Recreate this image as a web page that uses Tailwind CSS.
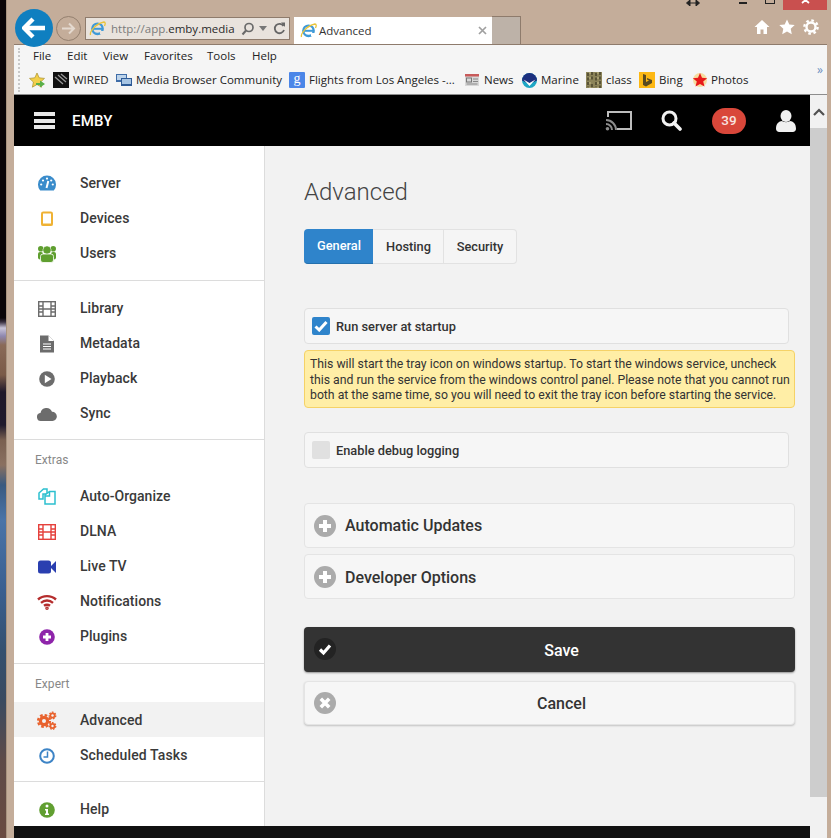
<!DOCTYPE html>
<html>
<head>
<meta charset="utf-8">
<script src="https://cdn.jsdelivr.net/npm/@tailwindcss/browser@4"></script>
<title>Advanced</title>
</head>
<body class="m-0">
<div class="flex w-[831px] h-[838px] overflow-hidden bg-[#c4ad9a] font-['Roboto',sans-serif] text-[#333]">
  <!-- wallpaper sliver -->
  <div class="w-[6px] h-full shrink-0 bg-[linear-gradient(180deg,#0a0508_0px,#0a0508_318px,#3a3040_322px,#c9c4d8_328px,#8f88b0_336px,#8a6a58_345px,#7a5a48_375px,#20182a_392px,#201a2c_425px,#7a6050_440px,#8a7060_465px,#3a5a80_485px,#4a74a8_520px,#3a5f90_590px,#34506f_650px,#3a4a60_700px,#5e4a48_760px,#6a4a40_838px)]"></div>

  <div class="w-[825px] h-full flex flex-col border-l border-[#a8937f]">
    <!-- title / navigation row -->
    <div class="h-[44px] shrink-0 flex items-start pl-[8px] pr-[4px] relative z-10">
      <div class="mt-[9px] w-[38px] h-[38px] rounded-full bg-[#0f7fc0] flex items-center justify-center shrink-0">
        <svg width="24" height="22" viewBox="0 0 24 22"><path d="M11 2 2 11l9 9M3 11h20" fill="none" stroke="#fff" stroke-width="4.4"/></svg>
      </div>
      <div class="ml-[3px] mt-[16px] w-[25px] h-[25px] rounded-full border border-[#94806f] flex items-center justify-center shrink-0">
        <svg width="15" height="13" viewBox="0 0 15 13"><path d="M8 1.500 13 6.500 8 11.500M13 6.500H1" fill="none" stroke="#e4d9cf" stroke-width="2"/></svg>
      </div>
      <div class="ml-[4px] mt-[17px] w-[205px] h-[23px] bg-[#e9e3dd] border border-[#8e7b6c] flex items-center pl-[3px] text-[11.5px] font-['Open_Sans',sans-serif] shrink-0">
        <svg width="17" height="17" viewBox="0 0 17 17" class="shrink-0"><circle cx="8.500" cy="8.800" r="5.200" fill="none" stroke="#3f9ad8" stroke-width="2.400"/><path d="M4 8.800h9.500" stroke="#3f9ad8" stroke-width="2"/><path d="M11 11h4v3h-4z" fill="#e9e3dd"/><path d="M1.500 15C.5 12 6 4 15 2c1.500 0 1.500 2 .5 4" fill="none" stroke="#e8c33a" stroke-width="1.300"/></svg>
        <span class="ml-[5px] text-[#7b7b7b] whitespace-nowrap">http://app.<span class="text-[#2a2a2a]">emby.media</span></span>
        <svg width="14" height="14" viewBox="0 0 14 14" class="ml-[6px] shrink-0"><circle cx="8" cy="5.500" r="4" fill="none" stroke="#6a6a6a" stroke-width="1.700"/><path d="M5 8.500 1.500 12.500" stroke="#6a6a6a" stroke-width="2"/></svg>
        <svg width="8" height="5" viewBox="0 0 8 5" class="ml-[4px] shrink-0"><path d="M0 0h8L4 5z" fill="#777"/></svg>
        <svg width="13" height="13" viewBox="0 0 13 13" class="ml-[6px] shrink-0"><path d="M10.500 4A4.700 4.700 0 1 0 11 8" fill="none" stroke="#666" stroke-width="1.800"/><path d="M8 .5 12 .5 12 5z" fill="#666"/></svg>
      </div>
      <div class="ml-[4px] mt-[17px] w-[198px] h-[27px] bg-white flex items-center pl-[6px] text-[11.5px] font-['Open_Sans',sans-serif] shrink-0">
        <svg width="17" height="17" viewBox="0 0 17 17" class="shrink-0"><circle cx="8.500" cy="8.800" r="5.200" fill="none" stroke="#3f9ad8" stroke-width="2.400"/><path d="M4 8.800h9.500" stroke="#3f9ad8" stroke-width="2"/><path d="M11 11h4v3h-4z" fill="#fff"/><path d="M1.500 15C.5 12 6 4 15 2c1.500 0 1.500 2 .5 4" fill="none" stroke="#e8c33a" stroke-width="1.300"/></svg>
        <span class="ml-[2px] text-[#333] w-[159px]">Advanced</span>
        <svg width="9" height="9" viewBox="0 0 9 9" class="shrink-0"><path d="M1 1l7 7M8 1 1 8" stroke="#a0a0a0" stroke-width="1.700"/></svg>
      </div>
      <div class="mt-[16px] w-[29px] h-[28px] bg-[#bdb2a8] border border-b-0 border-l-0 border-[#8e7b6c] shrink-0"></div>
      <!-- caption + tool icons -->
      <div class="ml-auto w-[141px] h-[44px] flex flex-col shrink-0">
        <div class="h-[10px] flex items-start relative overflow-hidden">
          <svg width="14" height="6" viewBox="0 0 14 6" class="shrink-0"><path d="M3 3h8M4 0 .5 3 4 6zM10 0l3.500 3L10 6z" stroke="#222" fill="#222"/></svg>
          <div class="ml-[39px] mt-[2px] w-[8px] h-[2px] bg-[#222] shrink-0"></div>
          <div class="ml-[18px] -mt-[6px] w-[10px] h-[10px] border border-[#222] shrink-0"></div>
          <div class="ml-[8px] w-[44px] h-[10px] bg-[#c9504f] flex items-start justify-center shrink-0">
            <svg width="9" height="5" viewBox="0 0 9 5"><path d="M1-3 8 3M8-3 1 3" stroke="#fff" stroke-width="1.800"/></svg>
          </div>
        </div>
        <div class="flex items-center pl-[68px] mt-[9px] gap-[8.500px]">
          <svg width="16" height="16" viewBox="0 0 16 16"><path d="M8 1 .5 8H3v7h3.500v-4.500h3V15H13V8h2.500z" fill="#fff"/></svg>
          <svg width="16" height="16" viewBox="0 0 16 16"><path d="M8 .5l2.300 5 5.400.6-4 3.700 1.100 5.400L8 12.500l-4.800 2.700 1.100-5.400-4-3.700 5.400-.6z" fill="#fff"/></svg>
          <svg width="16" height="16" viewBox="0 0 16 16"><circle cx="8" cy="8" r="4.500" fill="none" stroke="#fff" stroke-width="2.400"/><circle cx="8" cy="8" r="6.600" fill="none" stroke="#fff" stroke-width="2.400" stroke-dasharray="2.600 2.600"/></svg>
        </div>
      </div>
    </div>

    <!-- content + chrome -->
    <div class="ml-[7px] w-[813px] h-[794px] flex flex-col bg-[#f5f5f5]">
      <!-- menu and favourites -->
      <div class="h-[51px] shrink-0 border-b border-[#8d8d8d] relative text-[11.5px] font-['Open_Sans',sans-serif] text-[#222] border-t border-t-[#8e7b6c]">
        <div class="absolute left-[4px] top-[3px] h-[44px] border-l-2 border-dotted border-[#c8c8c8]"></div>
        <div class="h-[21px] pl-[19px] flex items-center">
          <span class="w-[34px]">File</span>
          <span class="w-[36px]">Edit</span>
          <span class="w-[41px]">View</span>
          <span class="w-[63px]">Favorites</span>
          <span class="w-[45px]">Tools</span>
          <span>Help</span>
        </div>
        <div class="h-[28px] pl-[15px] flex items-center whitespace-nowrap">
          <span class="w-[24px] shrink-0">
            <svg width="17" height="17" viewBox="0 0 17 17" class="block"><path d="M8 1l2.200 4.800 5.300.6-3.900 3.600 1 5.200L8 12.500l-4.600 2.700 1-5.200L.5 6.400l5.300-.6z" fill="#f2cf4a" stroke="#a88f2c" stroke-width=".7"/><path d="M7 11h4V8.500l5 3.500-5 3.500V13H7z" fill="#5ab04a"/></svg>
          </span>
          <span class="w-[63px] flex items-center gap-[4px] shrink-0">
            <svg width="16" height="16" viewBox="0 0 16 16" class="shrink-0"><rect width="16" height="16" fill="#111"/><path d="M2 5l8 7M5 3l8 7M8 2l6 5" stroke="#999" stroke-width="1.300"/></svg>WIRED
          </span>
          <span class="w-[173px] flex items-center gap-[4px] shrink-0">
            <svg width="16" height="16" viewBox="0 0 16 16" class="shrink-0"><rect x="0" y="2" width="11" height="8" fill="#3f6da8"/><rect x="1" y="3" width="9" height="5" fill="#bcd3ea"/><rect x="5" y="6" width="11" height="8" fill="#2d5a96"/><rect x="6" y="7" width="9" height="5" fill="#a6c4e3"/></svg>Media Browser Community
          </span>
          <span class="w-[176px] flex items-center gap-[4px] shrink-0">
            <span class="w-[16px] h-[16px] bg-[#4b86e8] rounded-[1px] text-white text-[14px] leading-[14px] text-center font-['Liberation_Serif',serif] shrink-0">g</span>Flights from Los Angeles -...
          </span>
          <span class="w-[57px] flex items-center gap-[5px] shrink-0">
            <svg width="14" height="12" viewBox="0 0 14 12" class="shrink-0"><rect width="14" height="12" fill="#d8d8d8"/><rect width="14" height="2.500" fill="#c85a5a"/><rect x="1.500" y="4" width="5" height="4" fill="none" stroke="#777"/><path d="M8 5h5M8 7.500h5M1.500 10h11" stroke="#888"/></svg>News
          </span>
          <span class="w-[64px] flex items-center gap-[4px] shrink-0">
            <svg width="15" height="15" viewBox="0 0 15 15" class="shrink-0"><circle cx="7.500" cy="7.500" r="7.500" fill="#1ea7c5"/><path d="M0 7.500a7.500 7.500 0 0 1 15 0L7.500 11z" fill="#1c2f7e"/><path d="M1.500 6.500 7.500 10l6-3.500L7.500 13z" fill="#fff"/></svg>Marine
          </span>
          <span class="w-[53px] flex items-center gap-[4px] shrink-0">
            <svg width="16" height="16" viewBox="0 0 16 16" class="shrink-0"><rect width="16" height="16" fill="#8b8359"/><path d="M2 1v14M6 0v9M6 12v4M10 1v14M14 0v16" stroke="#3f3a26" stroke-width="1.300" stroke-dasharray="3 1.500"/><path d="M4 0v16M12 0v16" stroke="#c3b98a" stroke-dasharray="2 3"/></svg>class
          </span>
          <span class="w-[53px] flex items-center gap-[4px] shrink-0">
            <svg width="16" height="16" viewBox="0 0 16 16" class="shrink-0"><rect width="16" height="16" fill="#fdb813"/><path d="M4 2l3 1v7l3-1.500L8 7.500V6l5 2v3l-6 3.500L4 13z" fill="#5a4a20"/></svg>Bing
          </span>
          <span class="flex items-center gap-[3px] shrink-0">
            <svg width="16" height="16" viewBox="0 0 16 16" class="shrink-0"><circle cx="8" cy="8" r="7" fill="#f6d27a" opacity=".7"/><path d="M8 1l2 4.800 5.200.4-4 3.400 1.300 5L8 11.900l-4.500 2.700 1.300-5-4-3.400 5.200-.4z" fill="#e81a1a"/></svg>Photos
          </span>
        </div>
        <span class="absolute right-[4px] top-[19px] text-[#6a8fc0] text-[12px] leading-none">»</span>
      </div>

      <div class="flex-1 flex min-h-0">
        <div class="w-[796px] shrink-0 flex flex-col">
          <!-- app header -->
          <header class="h-[51px] shrink-0 bg-black flex items-center text-white">
            <div class="ml-[20px] w-[21px] flex flex-col gap-[2.500px]">
              <div class="h-[4px] bg-[#e8e8e8]"></div><div class="h-[4px] bg-[#e8e8e8]"></div><div class="h-[4px] bg-[#e8e8e8]"></div>
            </div>
            <span class="ml-[17px] pt-[2px] text-[15px] font-medium tracking-[0.2px]">EMBY</span>
            <svg width="27" height="21" viewBox="0 0 27 21" class="ml-auto shrink-0"><path d="M3 7V2h23v17H12" fill="none" stroke="#bdbdbd" stroke-width="2"/><path d="M1 10a10 10 0 0 1 10 10M1 14a6 6 0 0 1 6 6" fill="none" stroke="#8c8c8c" stroke-width="2"/><circle cx="2.500" cy="18.800" r="1.800" fill="#8c8c8c"/></svg>
            <svg width="21" height="21" viewBox="0 0 21 21" class="ml-[29px] shrink-0"><circle cx="8.500" cy="8.500" r="6.500" fill="none" stroke="#f2f2f2" stroke-width="3"/><path d="M13 13l6 6" stroke="#f2f2f2" stroke-width="3.600" stroke-linecap="round"/></svg>
            <span class="ml-[30px] w-[34px] h-[26px] rounded-full bg-[#d9473a] text-[#f8e4e0] text-[13.5px] font-medium flex items-center justify-center shrink-0">39</span>
            <svg width="20" height="22" viewBox="0 0 20 22" class="ml-[30px] mr-[14px] shrink-0"><ellipse cx="10" cy="6" rx="5.500" ry="6" fill="#f0f0f0"/><path d="M0 19c0-6 3-7.500 6-8 2 1.500 6 1.500 8 0 3 .5 6 2 6 8 0 2-2 3-3 3H3c-1 0-3-1-3-3z" fill="#f0f0f0"/></svg>
          </header>

          <div class="flex-1 flex min-h-0">
            <!-- sidebar -->
            <nav class="w-[251px] shrink-0 bg-white border-r border-[#dcdcdc] flex flex-col text-[14px] font-medium tracking-[0.05px] text-[#3a3a3a]">
              <div class="pt-[20px] pb-[9px] border-b border-[#dcdcdc]">
                <a class="h-[35px] flex items-center">
                  <svg width="20" height="20" viewBox="0 0 20 20" class="ml-[23px] mr-[23px] shrink-0"><path d="M3.200 16.500a9 9 0 1 1 13.600 0z" fill="#3a8ccb"/><g fill="#fff"><circle cx="4.200" cy="10.500" r="1.100"/><circle cx="6" cy="6.500" r="1.100"/><circle cx="10" cy="4.600" r="1.100"/><circle cx="14.200" cy="6.500" r="1.100"/><circle cx="15.800" cy="10.500" r="1.100"/></g><path d="M11.300 7 9.500 14" stroke="#fff" stroke-width="2"/></svg>
                  Server
                </a>
                <a class="h-[35px] flex items-center">
                  <svg width="20" height="20" viewBox="0 0 20 20" class="ml-[23px] mr-[23px] shrink-0"><rect x="5" y="3.500" width="10" height="12.500" rx="1.200" fill="none" stroke="#efb234" stroke-width="2"/><path d="M4.500 14.500h11v2h-11z" fill="#efb234"/></svg>
                  Devices
                </a>
                <a class="h-[35px] flex items-center">
                  <svg width="20" height="20" viewBox="0 0 20 20" class="ml-[23px] mr-[23px] shrink-0" fill="#5f9f2f"><circle cx="3.800" cy="4.800" r="2.800"/><circle cx="16.200" cy="4.800" r="2.800"/><rect x="1" y="8" width="5" height="7.500" rx="2"/><rect x="14" y="8" width="5" height="7.500" rx="2"/><g stroke="#fff" stroke-width=".8"><circle cx="10" cy="6" r="4"/><rect x="3.500" y="10" width="13" height="8.500" rx="2.500"/></g><circle cx="10" cy="6" r="3.600"/></svg>
                  Users
                </a>
              </div>
              <div class="pt-[10px] pb-[8px] border-b border-[#dcdcdc]">
                <a class="h-[35px] flex items-center">
                  <svg width="20" height="20" viewBox="0 0 20 20" class="ml-[23px] mr-[23px] shrink-0"><rect x="1.700" y="2.700" width="16.600" height="14.600" fill="none" stroke="#6c6c6c" stroke-width="1.400"/><path d="M6 3v14M14 3v14M2 7h4M2 10h4M2 13h4M14 7h4M14 10h4M14 13h4M6 10h8" stroke="#6c6c6c" stroke-width="1.400"/></svg>
                  Library
                </a>
                <a class="h-[35px] flex items-center">
                  <svg width="20" height="20" viewBox="0 0 20 20" class="ml-[23px] mr-[23px] shrink-0"><path d="M3 1.500h8.500L17 7v11.500H3z" fill="#6c6c6c"/><path d="M11.500 1.500V7H17z" fill="#fff"/><path d="M6 10h8M6 12.500h8M6 15h8" stroke="#fff" stroke-width="1.200"/></svg>
                  Metadata
                </a>
                <a class="h-[35px] flex items-center">
                  <svg width="20" height="20" viewBox="0 0 20 20" class="ml-[23px] mr-[23px] shrink-0"><circle cx="10" cy="10" r="7.800" fill="#6c6c6c"/><path d="M7.800 5.800 14.500 10l-6.700 4.200z" fill="#fff"/></svg>
                  Playback
                </a>
                <a class="h-[35px] flex items-center">
                  <svg width="20" height="20" viewBox="0 0 20 20" class="ml-[23px] mr-[23px] shrink-0"><path d="M4.500 17A4 4 0 0 1 3.500 9 6 6 0 0 1 15 7.800 4.600 4.600 0 0 1 15.500 17z" fill="#6c6c6c"/></svg>
                  Sync
                </a>
              </div>
              <div class="pb-[9px] border-b border-[#dcdcdc]">
                <div class="h-[39px] pl-[21px] flex items-center text-[12px] font-normal text-[#888]">Extras</div>
                <a class="h-[35px] flex items-center">
                  <svg width="20" height="20" viewBox="0 0 20 20" class="ml-[23px] mr-[23px] shrink-0" fill="none" stroke="#2cc0cf" stroke-width="1.500"><path d="M2 6 6.500 2H10v5H6v5H2z"/><path d="M8 8l4.500-3.500H18V17H8z" fill="#fff"/><path d="M12.500 5v4H8"/></svg>
                  Auto-Organize
                </a>
                <a class="h-[35px] flex items-center">
                  <svg width="20" height="20" viewBox="0 0 20 20" class="ml-[23px] mr-[23px] shrink-0"><rect x="1.700" y="2.700" width="16.600" height="14.600" fill="none" stroke="#e5413c" stroke-width="1.400"/><path d="M6 3v14M14 3v14M2 7h4M2 10h4M2 13h4M14 7h4M14 10h4M14 13h4M6 10h8" stroke="#e5413c" stroke-width="1.400"/></svg>
                  DLNA
                </a>
                <a class="h-[35px] flex items-center">
                  <svg width="20" height="20" viewBox="0 0 20 20" class="ml-[23px] mr-[23px] shrink-0" fill="#2a3fb0"><rect x="1" y="3.500" width="13" height="13" rx="2.500"/><path d="M14 9 19 4v12l-5-5z"/></svg>
                  Live TV
                </a>
                <a class="h-[35px] flex items-center">
                  <svg width="20" height="20" viewBox="0 0 20 20" class="ml-[23px] mr-[23px] shrink-0" fill="none" stroke="#b52d2d" stroke-width="2.400"><path d="M1 7.500c5-4.500 13-4.500 18 0"/><path d="M4 10.800c3.500-3 8.500-3 12 0"/><path d="M7 13.800c2-1.500 4-1.500 6 0"/><circle cx="10" cy="16.300" r=".6" fill="#b52d2d"/></svg>
                  Notifications
                </a>
                <a class="h-[35px] flex items-center">
                  <svg width="20" height="20" viewBox="0 0 20 20" class="ml-[23px] mr-[23px] shrink-0"><circle cx="10" cy="10" r="7.800" fill="#8e24aa"/><path d="M10 6v8M6 10h8" stroke="#fff" stroke-width="2.800"/></svg>
                  Plugins
                </a>
              </div>
              <div class="pb-[9px] border-b border-[#dcdcdc]">
                <div class="h-[38px] pl-[21px] pt-[2px] flex items-center text-[12px] font-normal text-[#888]">Expert</div>
                <a class="h-[35px] pt-[2px] flex items-center bg-[#f2f2f2]">
                  <svg width="20" height="20" viewBox="0 0 20 20" class="ml-[23px] mr-[23px] shrink-0"><g fill="none" stroke="#e8612c"><circle cx="7" cy="10" r="6" stroke-width="2.200" stroke-dasharray="2.700 2"/><circle cx="15.500" cy="4.500" r="3.300" stroke-width="1.300" stroke-dasharray="1.700 1.200"/><circle cx="15.500" cy="15" r="3.300" stroke-width="1.300" stroke-dasharray="1.700 1.200"/></g><g fill="#e8612c"><circle cx="7" cy="10" r="5.200"/><circle cx="15.500" cy="4.500" r="3"/><circle cx="15.500" cy="15" r="3"/></g><g fill="#f2f2f2"><circle cx="7" cy="10" r="2"/><circle cx="15.500" cy="4.500" r="1.200"/><circle cx="15.500" cy="15" r="1.200"/></g></svg>
                  Advanced
                </a>
                <a class="h-[35px] pt-[2px] flex items-center tracking-[0.12px]">
                  <svg width="20" height="20" viewBox="0 0 20 20" class="ml-[23px] mr-[23px] shrink-0" fill="none" stroke="#3d84c6"><circle cx="10" cy="10" r="6.800" stroke-width="2"/><path d="M10.500 5.500V11H6.500" stroke-width="1.500"/></svg>
                  Scheduled Tasks
                </a>
              </div>
              <div class="pt-[10px]">
                <a class="h-[35px] flex items-center">
                  <svg width="20" height="20" viewBox="0 0 20 20" class="ml-[23px] mr-[23px] shrink-0"><circle cx="10" cy="10" r="7.800" fill="#619f31"/><circle cx="10" cy="6" r="1.500" fill="#fff"/><path d="M8 9h3v4.500h1V15H8v-1.500h1V10.500H8z" fill="#fff"/></svg>
                  Help
                </a>
              </div>
            </nav>

            <!-- main -->
            <main class="flex-1 bg-[#f2f2f2] pl-[39px] pt-[31px]">
              <h1 class="text-[24px] leading-[30px] font-light text-[#444]">Advanced</h1>
              <div class="mt-[22px] flex h-[35px] w-[213px] text-[12.8px] font-medium">
                <div class="w-[69px] pl-[1px] bg-[#2f84cb] rounded-l-[4px] text-white flex items-center justify-center border-b border-[#2470ad]">General</div>
                <div class="w-[71px] pl-[1px] bg-[#f5f5f5] border-y border-r border-[#e2e2e2] flex items-center justify-center">Hosting</div>
                <div class="w-[73px] bg-[#f5f5f5] border-y border-r border-[#e2e2e2] rounded-r-[4px] flex items-center justify-center">Security</div>
              </div>

              <label class="mt-[44px] w-[485px] h-[36px] bg-[#f6f6f6] border border-[#e0e0e0] rounded-[4px] flex items-center pl-[7px] text-[12.8px] font-medium">
                <span class="w-[18px] h-[18px] rounded-[2px] bg-[#2f84cb] flex items-center justify-center shrink-0">
                  <svg width="14" height="12" viewBox="0 0 14 12"><path d="M1.500 6.500 5.200 10 12.500 2" fill="none" stroke="#fff" stroke-width="3"/></svg>
                </span>
                <span class="ml-[6px] pt-[2px]">Run server at startup</span>
              </label>
              <div class="mt-[6px] w-[491px] h-[58px] bg-[#ffeea6] border border-[#f5d267] rounded-[4px] pl-[5px] pr-[1px] pt-[6px] text-[12.25px] leading-[15.500px] text-[#333]">
                This will start the tray icon on windows startup. To start the windows service, uncheck this and run the service from the windows control panel. Please note that you cannot run both at the same time, so you will need to exit the tray icon before starting the service.
              </div>
              <label class="mt-[24px] w-[485px] h-[36px] bg-[#f6f6f6] border border-[#e0e0e0] rounded-[4px] flex items-center pl-[7px] text-[12.8px] font-medium">
                <span class="w-[18px] h-[18px] rounded-[2px] bg-[#e0e0e0] shrink-0"></span>
                <span class="ml-[6px] pt-[2px]">Enable debug logging</span>
              </label>

              <div class="mt-[35px] w-[491px] h-[45px] bg-[#f6f6f6] border border-[#e4e4e4] rounded-[4px] flex items-center pl-[9px] text-[16px] font-medium">
                <svg width="22" height="22" viewBox="0 0 22 22" class="shrink-0"><circle cx="11" cy="11" r="11" fill="#ababab"/><path d="M11 5v12M5 11h12" stroke="#fff" stroke-width="4"/></svg>
                <span class="ml-[9px]">Automatic Updates</span>
              </div>
              <div class="mt-[6px] w-[491px] h-[45px] bg-[#f6f6f6] border border-[#e4e4e4] rounded-[4px] flex items-center pl-[9px] text-[16px] font-medium">
                <svg width="22" height="22" viewBox="0 0 22 22" class="shrink-0"><circle cx="11" cy="11" r="11" fill="#ababab"/><path d="M11 5v12M5 11h12" stroke="#fff" stroke-width="4"/></svg>
                <span class="ml-[9px] pt-[2px]">Developer Options</span>
              </div>

              <button class="mt-[28px] w-[491px] h-[45px] bg-[#333] rounded-[4px] shadow-[0_1px_2px_rgba(0,0,0,0.4)] flex items-center pl-[10px] text-white text-[16px] font-medium relative">
                <svg width="22" height="22" viewBox="0 0 22 22" class="shrink-0 -mt-[1px]"><circle cx="11" cy="11" r="11" fill="#232323"/><path d="M6 11.500 9.500 15 16 7.500" fill="none" stroke="#fff" stroke-width="3.200"/></svg>
                <span class="absolute inset-0 flex items-center justify-center pl-[24px] pt-[2px]">Save</span>
              </button>
              <button class="mt-[9px] w-[491px] h-[44px] bg-[#f6f6f6] border border-[#e4e4e4] rounded-[4px] shadow-[0_1px_2px_rgba(0,0,0,0.2)] flex items-center pl-[9px] text-[16px] font-medium text-[#333] relative">
                <svg width="22" height="22" viewBox="0 0 22 22" class="shrink-0"><circle cx="11" cy="11" r="11" fill="#ababab"/><path d="M6.800 6.800l8.400 8.400M15.200 6.800l-8.400 8.400" stroke="#fff" stroke-width="3.600"/></svg>
                <span class="absolute inset-0 flex items-center justify-center pl-[24px] pt-[2px]">Cancel</span>
              </button>
            </main>
          </div>
          <footer class="h-[12px] shrink-0 bg-[#111]"></footer>
        </div>
        <!-- scrollbar -->
        <div class="w-[17px] shrink-0 bg-[#f1f1f1] flex flex-col">
          <div class="h-[33px] flex items-center justify-center">
            <svg width="12" height="8" viewBox="0 0 12 8"><path d="M1 7l5-5 5 5" fill="none" stroke="#505050" stroke-width="2.200"/></svg>
          </div>
          <div class="h-[669px] bg-[#cdcdcd]"></div>
        </div>
      </div>
    </div>
  </div>
</div>
</body>
</html>
